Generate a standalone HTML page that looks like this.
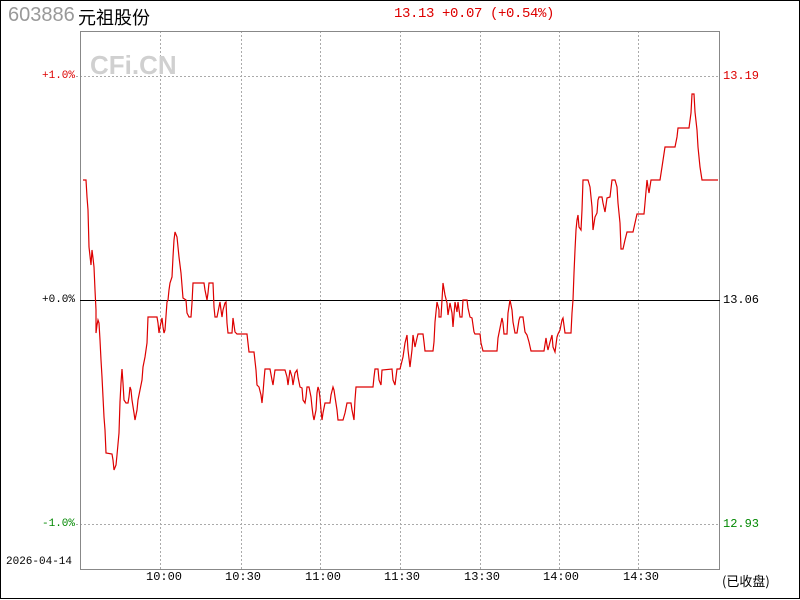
<!DOCTYPE html>
<html><head><meta charset="utf-8"><style>
html,body{margin:0;padding:0;background:#fff}
body{width:800px;height:600px;position:relative;overflow:hidden;font-family:"Liberation Sans","WenQuanYi Zen Hei",sans-serif}
.t{position:absolute;white-space:nowrap}
</style></head><body>
<svg width="800" height="600" style="position:absolute;left:0;top:0">
<rect x="0.5" y="0.5" width="799" height="598" fill="none" stroke="#000"/>
<g stroke="#aaa" stroke-dasharray="2,2" stroke-width="1">
<line x1="160.5" y1="31" x2="160.5" y2="569"/><line x1="241.5" y1="31" x2="241.5" y2="569"/>
<line x1="320.5" y1="31" x2="320.5" y2="569"/><line x1="400.5" y1="31" x2="400.5" y2="569"/>
<line x1="480.5" y1="31" x2="480.5" y2="569"/><line x1="559.5" y1="31" x2="559.5" y2="569"/>
<line x1="638.5" y1="31" x2="638.5" y2="569"/>
<line x1="76" y1="76.5" x2="720" y2="76.5"/><line x1="76" y1="524.5" x2="720" y2="524.5"/>
</g>
<rect x="80.5" y="31.5" width="639" height="538" fill="none" stroke="#888"/>
<text x="90" y="74" font-family="Liberation Sans" font-weight="bold" font-size="26" fill="#d0d0d0">CFi.CN</text>
<line x1="80" y1="300.5" x2="720" y2="300.5" stroke="#000"/>
<polyline fill="none" stroke="#d00" stroke-width="1.2" points="83,180 86,180 87,197 88,210 89,247 91,265 92,250 93,258 94,267 95,290 96,310 96,333 97,325 98,320 99,323 100,340 101,360 102,377 103,397 104,417 105,430 106,453 112,454 113,460 114,470 116,465 117,455 119,433 120,402 121,383 122,369 123,383 124,400 126,403 128,403 129,397 130,387 131,390 132,400 134,413 135,420 137,410 138,400 140,390 142,380 143,367 145,357 147,343 148,317 157,317 158,323 159,333 160,327 162,318 163,327 164,333 165,330 167,302 168,300 169,290 170,283 172,277 173,257 174,240 175,232 177,237 178,247 179,257 181,273 183,298 186,300 187,313 189,317 191,317 192,303 193,283 204,283 205,290 207,300 208,293 209,283 213,283 214,307 215,317 217,317 219,307 220,302 221,310 222,317 223,310 225,303 226,302 227,323 228,333 232,333 233,318 235,332 237,334 247,334 248,343 249,352 254,352 256,370 257,385 259,387 261,395 262,403 263,393 264,380 265,369 270,369 272,380 273,385 275,370 285,370 287,377 288,385 290,370 292,377 293,385 295,373 297,370 298,377 300,387 302,388 303,400 305,403 306,397 307,387 309,387 311,397 312,407 313,415 314,420 316,410 317,393 318,387 319,390 320,398 321,410 322,420 323,413 325,403 330,403 331,395 333,387 334,390 335,397 337,410 338,420 343,420 345,413 347,403 351,403 352,410 354,420 355,400 356,387 373,387 374,377 375,369 378,369 379,380 381,385 382,370 392,369 393,380 395,385 397,369 400,369 403,357 405,343 407,335 408,350 410,367 412,350 413,335 415,347 417,338 418,334 423,334 424,342 425,351 433,351 434,342 435,322 437,302 439,310 439,317 441,317 442,300 443,283 445,295 447,303 448,315 450,303 452,313 453,327 455,302 457,312 458,302 460,317 462,317 463,300 467,300 468,308 470,317 472,318 474,332 475,334 480,334 481,343 483,351 497,351 498,338 500,328 502,318 503,323 504,334 507,334 508,313 510,300 512,310 513,322 515,333 517,333 519,320 520,317 523,317 525,332 527,335 529,342 531,351 544,351 546,338 547,345 548,350 550,342 552,335 553,347 555,352 557,337 558,334 560,330 562,320 563,318 565,333 571,333 572,313 573,300 574,273 575,250 576,230 577,220 578,215 579,227 581,230 582,210 583,180 588,180 590,187 592,207 593,230 595,217 597,213 598,200 599,197 602,197 603,203 605,212 607,198 610,197 612,180 615,180 617,187 618,203 620,223 621,249 623,249 625,240 627,232 633,232 635,223 637,214 644,214 645,203 647,180 648,187 649,193 651,180 660,180 662,167 665,147 675,147 677,137 678,128 689,128 691,113 692,94 694,94 695,112 697,130 698,147 700,167 702,180 718,180"/>
</svg>
<div class="t" style="left:8px;top:4px;font-size:20px;color:#999">603886</div>
<div class="t" style="left:78px;top:4px;font-size:18px;color:#000;font-family:'WenQuanYi Zen Hei','Noto Sans CJK SC',sans-serif">元祖股份</div>
<div class="t" style="left:394px;top:6px;font-size:14px;color:#d00;font-family:'Liberation Mono',monospace;letter-spacing:-0.4px">13.13 +0.07 (+0.54%)</div>
<div class="t" style="left:42px;top:70px;font-size:11px;color:#d00;font-family:'Liberation Mono',monospace">+1.0%</div>
<div class="t" style="left:42px;top:294px;font-size:11px;color:#000;font-family:'Liberation Mono',monospace">+0.0%</div>
<div class="t" style="left:42px;top:518px;font-size:11px;color:#080;font-family:'Liberation Mono',monospace">-1.0%</div>
<div class="t" style="left:723px;top:69px;font-size:12px;color:#d00;font-family:'Liberation Mono',monospace">13.19</div>
<div class="t" style="left:723px;top:293px;font-size:12px;color:#000;font-family:'Liberation Mono',monospace">13.06</div>
<div class="t" style="left:723px;top:517px;font-size:12px;color:#080;font-family:'Liberation Mono',monospace">12.93</div>
<div class="t" style="left:6px;top:556px;font-size:11px;color:#000;font-family:'Liberation Mono',monospace">2026-04-14</div>
<div class="t" style="left:146px;top:570px;font-size:12px;font-family:'Liberation Mono',monospace">10:00</div>
<div class="t" style="left:225px;top:570px;font-size:12px;font-family:'Liberation Mono',monospace">10:30</div>
<div class="t" style="left:305px;top:570px;font-size:12px;font-family:'Liberation Mono',monospace">11:00</div>
<div class="t" style="left:384px;top:570px;font-size:12px;font-family:'Liberation Mono',monospace">11:30</div>
<div class="t" style="left:464px;top:570px;font-size:12px;font-family:'Liberation Mono',monospace">13:30</div>
<div class="t" style="left:543px;top:570px;font-size:12px;font-family:'Liberation Mono',monospace">14:00</div>
<div class="t" style="left:623px;top:570px;font-size:12px;font-family:'Liberation Mono',monospace">14:30</div>
<div class="t" style="left:722px;top:571px;font-size:13px;font-family:'WenQuanYi Zen Hei','Noto Sans CJK SC',sans-serif">(已收盘)</div>
</body></html>
